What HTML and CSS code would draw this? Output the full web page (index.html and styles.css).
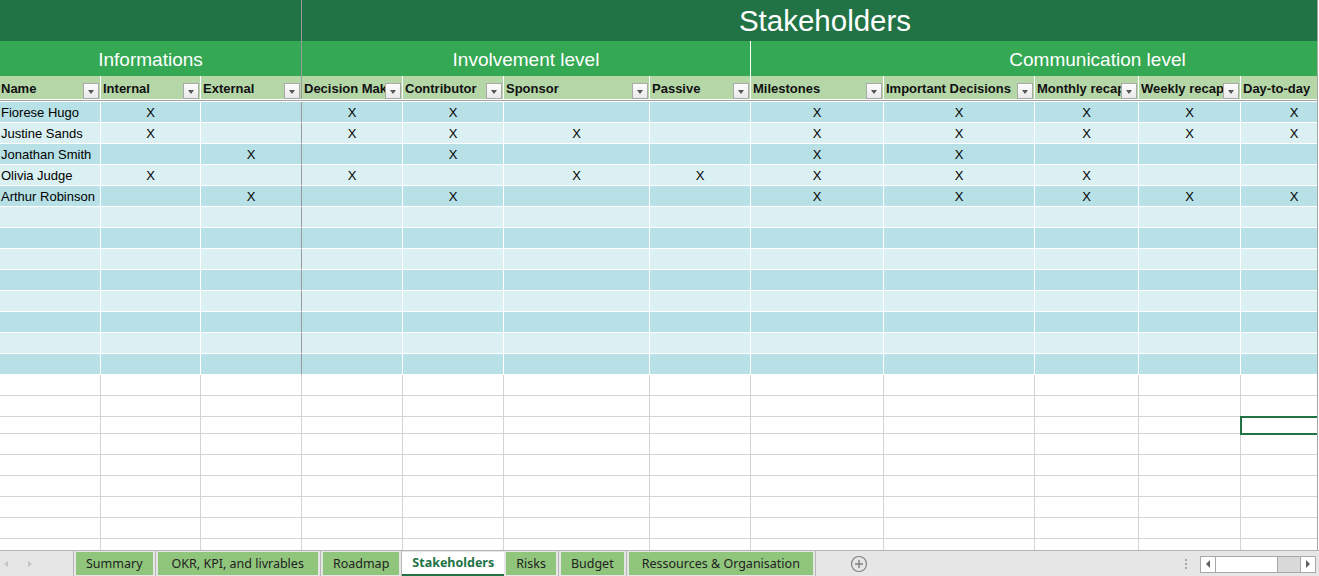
FILE: index.html
```html
<!DOCTYPE html>
<html lang="en">
<head>
  <meta charset="UTF-8">
  <title>Stakeholders</title>
  <link rel="stylesheet" href="styles.css">
</head>
<body>
  <div class="sheet">
    <!-- Titolo del foglio -->
    <div class="row title-row">
      <div class="cell span-info freeze"></div>
      <div class="cell span-stake">Stakeholders</div>
    </div>

    <!-- Gruppi di colonne -->
    <div class="row section-row">
      <div class="cell span-info freeze">Informations</div>
      <div class="cell span-inv">Involvement level</div>
      <div class="cell span-com">Communication level</div>
    </div>

    <!-- Intestazioni con filtro -->
    <div class="row head-row">
      <div class="cell head first"><span class="label">Name</span><span class="filter"></span></div>
      <div class="cell head"><span class="label">Internal</span><span class="filter"></span></div>
      <div class="cell head freeze"><span class="label">External</span><span class="filter"></span></div>
      <div class="cell head"><span class="label">Decision Maker</span><span class="filter"></span></div>
      <div class="cell head"><span class="label">Contributor</span><span class="filter"></span></div>
      <div class="cell head"><span class="label">Sponsor</span><span class="filter"></span></div>
      <div class="cell head"><span class="label">Passive</span><span class="filter"></span></div>
      <div class="cell head"><span class="label">Milestones</span><span class="filter"></span></div>
      <div class="cell head"><span class="label">Important Decisions</span><span class="filter"></span></div>
      <div class="cell head"><span class="label">Monthly recap</span><span class="filter"></span></div>
      <div class="cell head"><span class="label">Weekly recap</span><span class="filter"></span></div>
      <div class="cell head"><span class="label">Day-to-day</span><span class="filter"></span></div>
    </div>

    <div id="rows"></div>
  </div>

  <!-- Barra dei fogli in basso -->
  <div class="tabbar">
    <div class="nav">
      <span class="arrow arrow-left"></span>
      <span class="arrow arrow-right"></span>
    </div>
    <div class="tabs">
      <div class="tab"><span>Summary</span></div>
      <div class="tab wide"><span>OKR, KPI, and livrables</span></div>
      <div class="tab"><span>Roadmap</span></div>
      <div class="tab active"><span>Stakeholders</span></div>
      <div class="tab"><span>Risks</span></div>
      <div class="tab"><span>Budget</span></div>
      <div class="tab last"><span>Ressources &amp; Organisation</span></div>
    </div>
    <div class="add">
      <svg width="18" height="18" viewBox="0 0 18 18">
        <circle cx="9" cy="9" r="7.5" fill="none" stroke="#808080" stroke-width="1.2"/>
        <path d="M9 5v8M5 9h8" stroke="#808080" stroke-width="1.4"/>
      </svg>
    </div>
    <div class="spacer"></div>
    <div class="dots"><i></i><i></i><i></i></div>
    <div class="hscroll">
      <span class="sbtn"><span class="tri tri-left"></span></span>
      <span class="thumb"></span>
      <span class="track"></span>
      <span class="sbtn"><span class="tri tri-right"></span></span>
    </div>
  </div>

  <script>
    // Dati: Internal, External, Decision, Contributor, Sponsor, Passive,
    // Milestones, Important, Monthly, Weekly, Day-to-day
    const people = [
      ["Fiorese Hugo",    [1,0,1,1,0,0,1,1,1,1,1]],
      ["Justine Sands",   [1,0,1,1,1,0,1,1,1,1,1]],
      ["Jonathan Smith",  [0,1,0,1,0,0,1,1,0,0,0]],
      ["Olivia Judge",    [1,0,1,0,1,1,1,1,1,0,0]],
      ["Arthur Robinson", [0,1,0,1,0,0,1,1,1,1,1]]
    ];
    const rows = document.getElementById("rows");

    function makeRow(cls, name, marks) {
      const row = document.createElement("div");
      row.className = "row " + cls;
      for (let c = 0; c < 12; c++) {
        const cell = document.createElement("div");
        cell.className = "cell" + (c === 0 ? " name" : "") + (c === 2 ? " freeze" : "");
        if (c === 0) cell.textContent = name || "";
        else if (marks && marks[c - 1]) cell.textContent = "X";
        row.appendChild(cell);
      }
      return row;
    }

    // 13 righe a bande alternate della tabella
    for (let i = 0; i < 13; i++) {
      const p = people[i] || [];
      rows.appendChild(makeRow(i % 2 === 0 ? "band-dark" : "band-light", p[0], p[1]));
    }

    // Righe vuote del foglio
    const heights = [21, 21, 17, 21, 21, 21, 21, 21, 21];
    heights.forEach((h, i) => {
      const row = makeRow("plain");
      row.style.height = h + "px";
      if (i === 2) row.lastChild.classList.add("selected");
      rows.appendChild(row);
    });
  </script>
</body>
</html>
```

FILE: styles.css
```css
body {
  margin: 0;
  background: #fff;
  font-family: "Liberation Sans", Arial, sans-serif;
  overflow: hidden;
}
.sheet {
  width: 1317px;
  height: 550px;
  overflow: hidden;
  border-right: 1px solid #a6a6a6;
}
.row {
  display: grid;
  grid-template-columns: 101px 100px 101px 101px 101px 146px 101px 133px 151px 104px 102px 107px 96px;
  width: 1444px;
}
.cell {
  box-sizing: border-box;
  min-width: 0;
  white-space: nowrap;
  overflow: hidden;
}
/* Riga del titolo */
.title-row {
  height: 41px;
  background: #217346;
  color: #fff;
}
.title-row .cell {
  font-size: 29.5px;
  line-height: 42px;
  text-align: center;
}
.span-info { grid-column: 1 / 4; }
.span-stake { grid-column: 4 / 13; }
.span-inv { grid-column: 4 / 8; border-right: 1px solid #fff; }
.span-com { grid-column: 8 / 14; }
.title-row .freeze, .section-row .freeze {
  border-right: 1px solid #9a9a9a;
}
/* Gruppi */
.section-row {
  height: 35px;
  background: #34a853;
  color: #fff;
}
.section-row .cell {
  font-size: 19px;
  line-height: 37px;
  text-align: center;
}
/* Intestazioni */
.head-row {
  height: 23px;
  background: #a3a3a3;
  border-bottom: 3px double #fff;
}
.head {
  display: flex;
  align-items: flex-end;
  background: #b5d7a7;
  border-right: 1px solid #fff;
  font-size: 13px;
  font-weight: bold;
  color: #111;
  padding-left: 2px;
}
.head.first {
  padding-left: 1px;
}
.head.freeze {
  border-right-color: #9a9a9a;
}
.head .label {
  flex: 1;
  min-width: 0;
  overflow: hidden;
  line-height: 20px;
}
.filter {
  flex: none;
  width: 16px;
  height: 16px;
  box-sizing: border-box;
  margin-right: 1px;
  border: 1px solid #a9a9a9;
  background: linear-gradient(#fdfdfd, #e8e8e8);
  display: flex;
  align-items: center;
  justify-content: center;
}
.filter::after {
  content: "";
  border-left: 3.5px solid transparent;
  border-right: 3.5px solid transparent;
  border-top: 4px solid #555;
  margin-top: 2px;
}
/* Righe di dati */
.band-dark .cell, .band-light .cell {
  height: 21px;
  line-height: 21px;
  font-size: 13px;
  text-align: center;
  border-right: 1px solid #fff;
  border-bottom: 1px solid #fff;
}
.band-dark .cell { background: #b7e1e6; }
.band-light .cell { background: #daf0f2; }
.row .cell.name {
  text-align: left;
  padding-left: 1px;
}
.band-dark .freeze, .band-light .freeze, .plain .freeze {
  border-right-color: #9a9a9a;
}
.plain .cell {
  border-right: 1px solid #d4d4d4;
  border-bottom: 1px solid #d4d4d4;
}
.plain .cell.selected {
  position: relative;
  z-index: 1;
  overflow: visible;
  outline: 2px solid #217346;
  outline-offset: -1px;
}
/* Barra dei fogli */
.tabbar {
  display: flex;
  height: 25px;
  background: #e6e6e6;
  border-top: 1px solid #b4b4b4;
  font-family: "Noto Sans", "Open Sans", sans-serif;
  font-size: 12.5px;
  color: #222;
}
.nav {
  width: 74px;
  border-right: 1px solid #b8b8b8;
  display: flex;
  align-items: center;
  gap: 20px;
  padding-left: 4px;
  box-sizing: border-box;
}
.arrow {
  width: 0;
  height: 0;
  border-top: 3.5px solid transparent;
  border-bottom: 3.5px solid transparent;
}
.arrow-left { border-right: 4px solid #c4c4c4; }
.arrow-right { border-left: 4px solid #c4c4c4; }
.tabs {
  display: flex;
}
.tab {
  display: flex;
  padding: 1px 2px 1px;
  border-right: 1px solid #b8b8b8;
}
.tab span {
  background: #90c57c;
  padding: 0 10px;
  line-height: 24px;
}
.tab.wide span {
  padding: 0 14px;
}
.tab.last span {
  padding: 0 13px;
}
.tab.active {
  border-right: none;
  padding: 1px 0 0;
}
.tab.active span {
  background: #fff;
  color: #217346;
  font-weight: bold;
  line-height: 22px;
  border-bottom: 2px solid #217346;
  padding: 0 10px;
}
.add {
  display: flex;
  align-items: center;
  margin-left: 34px;
}
.spacer {
  flex: 1;
}
.dots {
  display: flex;
  flex-direction: column;
  justify-content: center;
  gap: 2px;
  margin-right: 13px;
}
.dots i {
  width: 2px;
  height: 2px;
  background: #a8a8a8;
}
.hscroll {
  display: flex;
  align-self: center;
  height: 15px;
  margin-right: 3px;
  margin-top: 1px;
  border: 1px solid #a8a8a8;
  background: #fff;
}
.sbtn {
  width: 14px;
  display: flex;
  align-items: center;
  justify-content: center;
  background: #fff;
}
.thumb {
  width: 61px;
  border-left: 1px solid #a8a8a8;
  border-right: 1px solid #a8a8a8;
}
.track {
  width: 22px;
  background: #d9d9d9;
  border-right: 1px solid #a8a8a8;
}
.tri {
  width: 0;
  height: 0;
  border-top: 4px solid transparent;
  border-bottom: 4px solid transparent;
}
.tri-left { border-right: 4px solid #606060; }
.tri-right { border-left: 4px solid #606060; }
```
